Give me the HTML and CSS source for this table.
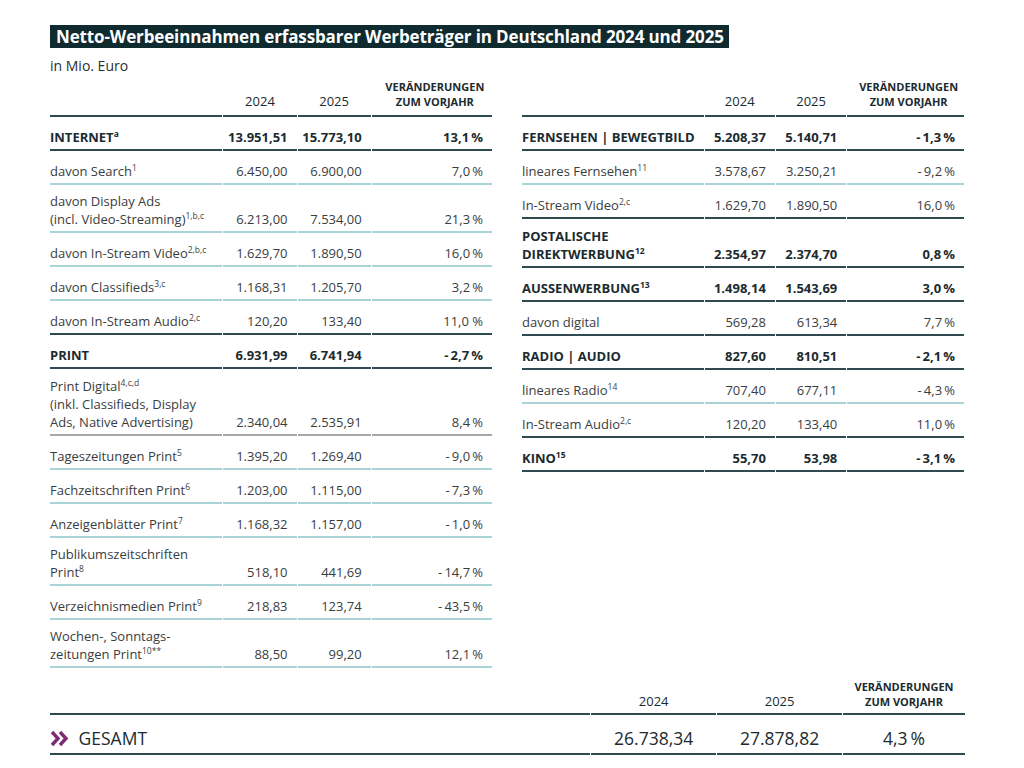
FILE: index.html
```html
<!DOCTYPE html>
<html lang="de">
<head>
    <meta charset="UTF-8">
    <meta name="viewport" content="width=device-width, initial-scale=1.0">
    <title>Netto-Werbeeinnahmen 2024 und 2025</title>
    <link rel="stylesheet" href="styles.css">
</head>
<body>
    <div class="page">
        <h1 class="title">Netto-Werbeeinnahmen erfassbarer Werbeträger in Deutschland 2024 und 2025</h1>
        <p class="unit">in Mio. Euro</p>

        <div class="tables">
            <table class="data">
                <colgroup>
                    <col class="c-label"><col class="c-num"><col class="c-num"><col class="c-chg">
                </colgroup>
                <thead>
                    <tr>
                        <th></th>
                        <th class="year">2024</th>
                        <th class="year">2025</th>
                        <th class="chg-head">VERÄNDERUNGEN<br>ZUM VORJAHR</th>
                    </tr>
                </thead>
                <tbody>
                    <tr class="main"><td>INTERNET<sup>a</sup></td><td>13.951,51</td><td>15.773,10</td><td>13,1&#8201;%</td></tr>
                    <tr class="sub"><td>davon Search<sup>1</sup></td><td>6.450,00</td><td>6.900,00</td><td>7,0&#8201;%</td></tr>
                    <tr class="sub multi"><td>davon Display Ads<br>(incl. Video-Streaming)<sup>1,b,c</sup></td><td>6.213,00</td><td>7.534,00</td><td>21,3&#8201;%</td></tr>
                    <tr class="sub"><td>davon In-Stream Video<sup>2,b,c</sup></td><td>1.629,70</td><td>1.890,50</td><td>16,0&#8201;%</td></tr>
                    <tr class="sub"><td>davon Classifieds<sup>3,c</sup></td><td>1.168,31</td><td>1.205,70</td><td>3,2&#8201;%</td></tr>
                    <tr class="sub end"><td>davon In-Stream Audio<sup>2,c</sup></td><td>120,20</td><td>133,40</td><td>11,0 %</td></tr>
                    <tr class="main"><td>PRINT</td><td>6.931,99</td><td>6.741,94</td><td>-&#8201;2,7&#8201;%</td></tr>
                    <tr class="sub gray"><td>Print Digital<sup>4,c,d</sup><br>(inkl. Classifieds, Display<br>Ads, Native Advertising)</td><td>2.340,04</td><td>2.535,91</td><td>8,4&#8201;%</td></tr>
                    <tr class="sub"><td>Tageszeitungen Print<sup>5</sup></td><td>1.395,20</td><td>1.269,40</td><td>-&#8201;9,0&#8201;%</td></tr>
                    <tr class="sub"><td>Fachzeitschriften Print<sup>6</sup></td><td>1.203,00</td><td>1.115,00</td><td>-&#8201;7,3&#8201;%</td></tr>
                    <tr class="sub"><td>Anzeigenblätter Print<sup>7</sup></td><td>1.168,32</td><td>1.157,00</td><td>-&#8201;1,0&#8201;%</td></tr>
                    <tr class="sub multi"><td>Publikumszeitschriften<br>Print<sup>8</sup></td><td>518,10</td><td>441,69</td><td>-&#8201;14,7&#8201;%</td></tr>
                    <tr class="sub"><td>Verzeichnismedien Print<sup>9</sup></td><td>218,83</td><td>123,74</td><td>-&#8201;43,5&#8201;%</td></tr>
                    <tr class="sub multi"><td>Wochen-, Sonntags-<br>zeitungen Print<sup>10**</sup></td><td>88,50</td><td>99,20</td><td>12,1&#8201;%</td></tr>
                </tbody>
            </table>

            <table class="data">
                <colgroup>
                    <col class="c-label"><col class="c-num"><col class="c-num"><col class="c-chg">
                </colgroup>
                <thead>
                    <tr>
                        <th></th>
                        <th class="year">2024</th>
                        <th class="year">2025</th>
                        <th class="chg-head">VERÄNDERUNGEN<br>ZUM VORJAHR</th>
                    </tr>
                </thead>
                <tbody>
                    <tr class="main"><td>FERNSEHEN | BEWEGTBILD</td><td>5.208,37</td><td>5.140,71</td><td>-&#8201;1,3&#8201;%</td></tr>
                    <tr class="sub"><td>lineares Fernsehen<sup>11</sup></td><td>3.578,67</td><td>3.250,21</td><td>-&#8201;9,2&#8201;%</td></tr>
                    <tr class="sub end"><td>In-Stream Video<sup>2,c</sup></td><td>1.629,70</td><td>1.890,50</td><td>16,0&#8201;%</td></tr>
                    <tr class="main"><td>POSTALISCHE<br>DIREKTWERBUNG<sup>12</sup></td><td>2.354,97</td><td>2.374,70</td><td>0,8&#8201;%</td></tr>
                    <tr class="main"><td>AUSSENWERBUNG<sup>13</sup></td><td>1.498,14</td><td>1.543,69</td><td>3,0&#8201;%</td></tr>
                    <tr class="sub end"><td>davon digital</td><td>569,28</td><td>613,34</td><td>7,7&#8201;%</td></tr>
                    <tr class="main"><td>RADIO | AUDIO</td><td>827,60</td><td>810,51</td><td>-&#8201;2,1&#8201;%</td></tr>
                    <tr class="sub"><td>lineares Radio<sup>14</sup></td><td>707,40</td><td>677,11</td><td>-&#8201;4,3&#8201;%</td></tr>
                    <tr class="sub end"><td>In-Stream Audio<sup>2,c</sup></td><td>120,20</td><td>133,40</td><td>11,0&#8201;%</td></tr>
                    <tr class="main"><td>KINO<sup>15</sup></td><td>55,70</td><td>53,98</td><td>-&#8201;3,1&#8201;%</td></tr>
                </tbody>
            </table>
        </div>

        <table class="total">
            <colgroup>
                <col class="t-label"><col class="t-num"><col class="t-num"><col class="t-chg">
            </colgroup>
            <thead>
                <tr>
                    <th></th>
                    <th class="year">2024</th>
                    <th class="year">2025</th>
                    <th class="chg-head">VERÄNDERUNGEN<br>ZUM VORJAHR</th>
                </tr>
            </thead>
            <tbody>
                <tr>
                    <td class="gesamt">
                        <svg class="chevrons" width="19" height="17" viewBox="0 0 19 17" aria-hidden="true">
                            <polyline points="2,2 8,8.5 2,15" />
                            <polyline points="10,2 16,8.5 10,15" />
                        </svg>
                        GESAMT
                    </td>
                    <td>26.738,34</td>
                    <td>27.878,82</td>
                    <td>4,3&#8201;%</td>
                </tr>
            </tbody>
        </table>
    </div>
</body>
</html>
```

FILE: styles.css
```css
body {
    margin: 0;
    background: #fff;
    font-family: "Open Sans", "Noto Sans", sans-serif;
    color: #3a3d3e;
}
.page {
    padding: 25px 0 0 50px;
    width: 915px;
}
.title {
    display: inline-block;
    margin: 0;
    padding: 0 5px 0 6px;
    background-color: #0f2b30;
    color: #fff;
    font-size: 17px;
    font-weight: 700;
    line-height: 23px;
    letter-spacing: -0.13px;
}
.unit {
    margin: 9px 0 0;
    font-size: 14px;
    line-height: 18px;
    color: #2a2f30;
}
.tables {
    display: flex;
    gap: 30px;
    align-items: flex-start;
    margin-top: 4px;
}
table {
    border-collapse: separate;
    border-spacing: 1px 0;
    margin: 0 -1px;
}
.data {
    width: 444px;
}
.c-label { width: 172px; }
.c-num { width: 73px; }
.c-chg { width: 120px; }

th {
    vertical-align: bottom;
    padding: 0 0 6px;
    border-bottom: 2px solid #2f4b51;
    color: #1b2b30;
    line-height: 15px;
}
th.year {
    font-size: 13px;
    font-weight: 400;
    text-align: center;
}
th.chg-head {
    font-size: 11px;
    font-weight: 700;
    text-align: center;
    padding-left: 6px;
}

.data td {
    height: 21px;
    vertical-align: bottom;
    padding: 8px 9px 3px 0;
    font-size: 13px;
    line-height: 18px;
    text-align: right;
    white-space: nowrap;
    border-bottom: 2px solid #a8d3d7;
}
.data tr.multi td {
    padding-top: 7px;
}
.data td:first-child {
    text-align: left;
    padding-left: 0;
}
.data tr.main td {
    font-weight: 700;
    color: #1b2b30;
    border-bottom-color: #2f4b51;
}
.data tr.sub.end td {
    border-bottom-color: #2f4b51;
}
.data tr.gray td {
    border-bottom-color: #a3a8a9;
}
sup {
    font-size: 8.5px;
    line-height: 0;
    vertical-align: 5px;
}

.total {
    width: 917px;
    margin-top: 11px;
}
.t-label { width: 541px; }
.t-num { width: 125px; }
.t-chg { width: 122px; }
.total th {
    padding-bottom: 4px;
}
.total th.chg-head {
    padding-left: 0;
}
.total td {
    padding: 12px 0 4px;
    font-size: 17.5px;
    line-height: 22px;
    text-align: center;
    color: #1b2b30;
    border-bottom: 2px solid #2f4b51;
}
.total td.gesamt {
    text-align: left;
}
.chevrons {
    vertical-align: -2px;
    margin-right: 5px;
}
.chevrons polyline {
    fill: none;
    stroke: #7b2c72;
    stroke-width: 3.4;
}
```
